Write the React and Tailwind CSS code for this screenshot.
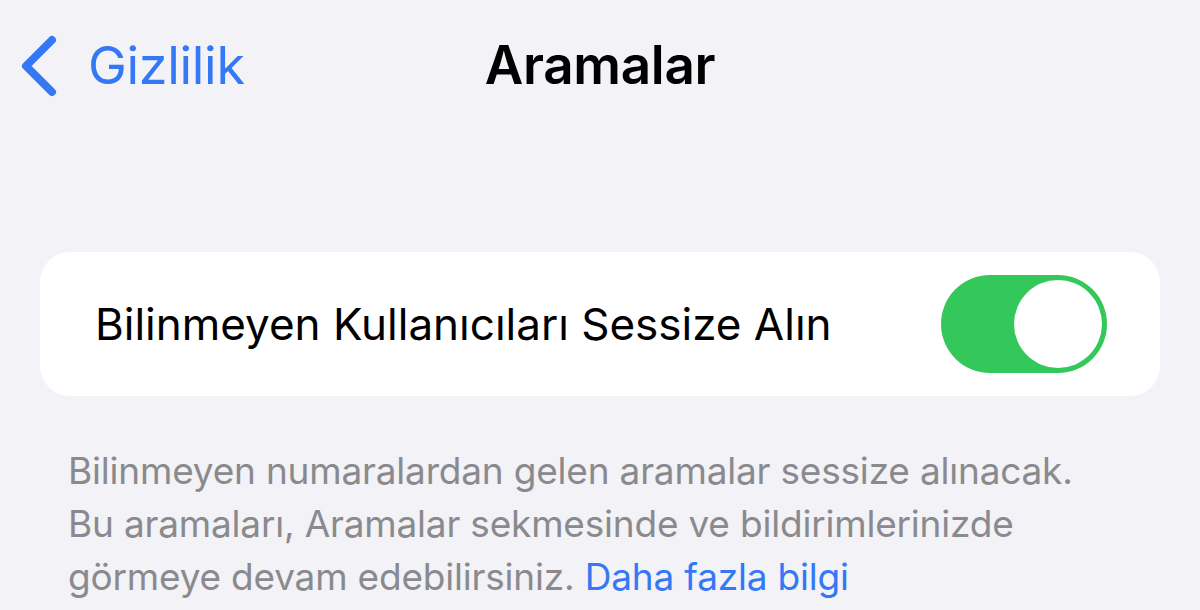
import React from 'react';

// iOS-style settings detail screen: nav bar, one switch row, footnote

function Toggle({ on = true }) {
  return (
    <div
      className={`flex h-[98px] w-[166px] shrink-0 items-center rounded-full p-[5px] ${
        on ? 'justify-end bg-[#34c759]' : 'justify-start bg-[#e5e5ea]'
      }`}
    >
      <span className="h-[88px] w-[88px] rounded-full bg-white" />
    </div>
  );
}

export default function App() {
  return (
    <div
      className="h-[610px] w-[1200px] overflow-hidden bg-[#f2f2f7]"
      style={{ fontFamily: 'Inter, "Noto Sans", sans-serif' }}
    >
      {/* Navigation bar */}
      <div className="relative flex h-[130px] items-start justify-center pt-[30px]">
        <div className="absolute left-[18px] top-[34px] flex items-center gap-[30px] text-[#3478f6]">
          <svg width="40" height="64" viewBox="0 0 40 64" fill="none">
            <path
              d="M34 6 L8 32 L34 58"
              stroke="currentColor"
              strokeWidth="8"
              strokeLinecap="round"
              strokeLinejoin="round"
            />
          </svg>
          <span className="text-[52px] leading-none tracking-[-0.3px]">Gizlilik</span>
        </div>
        <h1 className="mt-[9px] text-[53px] font-semibold leading-none tracking-[-0.3px] text-black">
          Aramalar
        </h1>
      </div>

      {/* Switch row */}
      <div className="mx-[40px] mt-[122px] flex h-[144px] items-center justify-between rounded-[30px] bg-white pl-[55px] pr-[53px]">
        <span className="text-[44px] text-black">
          Bilinmeyen Kullanıcıları Sessize Alın
        </span>
        <Toggle on />
      </div>

      {/* Footnote */}
      <p className="mt-[48px] pl-[68px] pr-[40px] text-[37px] leading-[53px] tracking-[-0.2px] text-[#8a8a8e]">
        Bilinmeyen numaralardan gelen aramalar sessize alınacak.
        <br />
        Bu aramaları, Aramalar sekmesinde ve bildirimlerinizde
        <br />
        görmeye devam edebilirsiniz.{' '}
        <span className="text-[#3478f6]">Daha fazla bilgi</span>
      </p>
    </div>
  );
}
